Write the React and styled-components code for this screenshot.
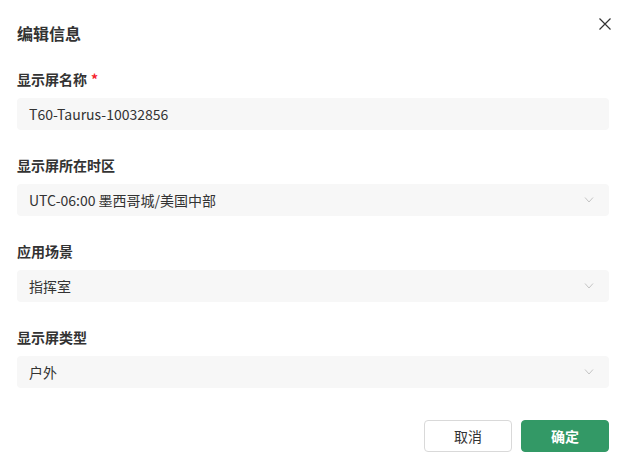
import React from 'react';
import styled, { createGlobalStyle } from 'styled-components';

const GlobalStyle = createGlobalStyle`
  html, body {
    margin: 0;
    padding: 0;
    background: #fff;
  }
  body {
    font-family: "Noto Sans CJK SC", "Noto Sans", sans-serif;
    color: #333;
  }
`;

const Dialog = styled.div`
  width: 630px;
  height: 473px;
  box-sizing: border-box;
  padding: 18px 21px 0 17px;
  background: #fff;
`;

const Header = styled.div`
  display: flex;
  justify-content: space-between;
  align-items: flex-start;
  margin-bottom: 23px;
`;

const Title = styled.h1`
  margin: 3px 0 0;
  font-size: 16px;
  line-height: 24px;
  font-weight: 700;
  color: #333;
`;

const CloseButton = styled.button`
  border: none;
  background: none;
  padding: 0;
  margin: 0 -2px 0 0;
  width: 12px;
  height: 12px;
  cursor: pointer;
  display: flex;
  svg {
    display: block;
  }
`;

const Field = styled.div`
  margin-bottom: 24px;
`;

const Label = styled.div`
  font-size: 14px;
  line-height: 22px;
  font-weight: 700;
  color: #333;
  margin-bottom: 8px;
  .required {
    color: #f5222d;
    margin-left: 4px;
    font-weight: 700;
  }
`;

const Box = styled.div`
  height: 32px;
  box-sizing: border-box;
  padding: 0 12px 0 12px;
  background: #f7f7f7;
  border-radius: 4px;
  display: flex;
  align-items: center;
  justify-content: space-between;
  font-size: 14px;
  color: #333;
`;

const Chevron = () => (
  <svg width="10" height="6" viewBox="0 0 10 6" fill="none" style={{ marginRight: 3 }}>
    <path d="M1 0.5 L5 5 L9 0.5" stroke="#c4c4c4" strokeWidth="1" />
  </svg>
);

const Footer = styled.div`
  display: flex;
  justify-content: flex-end;
  gap: 9px;
  margin-top: 32px;
`;

const Button = styled.button`
  width: 88px;
  height: 32px;
  box-sizing: border-box;
  border-radius: 4px;
  font-family: inherit;
  font-size: 14px;
  cursor: pointer;
  border: 1px solid ${p => (p.primary ? '#339966' : '#d9d9d9')};
  background: ${p => (p.primary ? '#339966' : '#fff')};
  color: ${p => (p.primary ? '#fff' : '#333')};
  font-weight: ${p => (p.primary ? 700 : 400)};
`;

const fields = [
  { label: '显示屏名称', value: 'T60-Taurus-10032856', required: true },
  { label: '显示屏所在时区', value: 'UTC-06:00 墨西哥城/美国中部', select: true },
  { label: '应用场景', value: '指挥室', select: true },
  { label: '显示屏类型', value: '户外', select: true },
];

export default function App() {
  return (
    <>
      <GlobalStyle />
      <Dialog>
        <Header>
          <Title>编辑信息</Title>
          <CloseButton aria-label="close">
            <svg width="12" height="12" viewBox="0 0 12 12">
              <path d="M0.5 0.5 L11.5 11.5 M11.5 0.5 L0.5 11.5" stroke="#333" strokeWidth="1.2" />
            </svg>
          </CloseButton>
        </Header>
        {fields.map(f => (
          <Field key={f.label}>
            <Label>
              {f.label}
              {f.required && <span className="required">*</span>}
            </Label>
            <Box>
              <span>{f.value}</span>
              {f.select && <Chevron />}
            </Box>
          </Field>
        ))}
        <Footer>
          <Button>取消</Button>
          <Button primary>确定</Button>
        </Footer>
      </Dialog>
    </>
  );
}
